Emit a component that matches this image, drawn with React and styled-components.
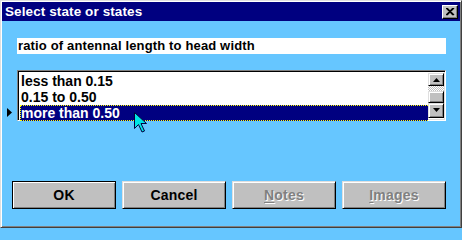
import React from 'react'
import styled, { createGlobalStyle } from 'styled-components'

const Global = createGlobalStyle`
    html, body {
        margin: 0;
        padding: 0;
        width: 462px;
        height: 228px;
        overflow: hidden;
        background: #66c6ff;
    }
    body {
        font-family: 'Liberation Sans', Arial, sans-serif;
        font-size: 12px;
        font-weight: bold;
    }
`

const Window = styled.div`
    position: relative;
    box-sizing: border-box;
    width: 462px;
    height: 228px;
    display: flex;
    flex-direction: column;
    background: #66c6ff;
    border-top: 1px solid #dfdfdf;
    border-left: 1px solid #dfdfdf;
    border-right: 1px solid #404040;
    border-bottom: 1px solid #404040;
    box-shadow: inset 1px 1px 0 #ffffff, inset -1px -1px 0 #808080;
    padding: 1px;
`

const TitleBar = styled.div`
    height: 19px;
    background: #000080;
    color: #ffffff;
    display: flex;
    align-items: center;
    justify-content: space-between;
    padding: 0 2px 0 3px;
    font-size: 13.5px;
    letter-spacing: 0.1px;
`

const CloseButton = styled.div`
    box-sizing: border-box;
    width: 16px;
    height: 14px;
    background: #c0c0c0;
    border-top: 1px solid #ffffff;
    border-left: 1px solid #ffffff;
    border-right: 1px solid #000000;
    border-bottom: 1px solid #000000;
    box-shadow: inset -1px -1px 0 #808080;
    display: flex;
    align-items: center;
    justify-content: center;
`

const Body = styled.div`
    flex: 1;
    display: flex;
    flex-direction: column;
    padding: 17px 14px 0 5px;
`

const Caption = styled.div`
    margin-left: 10px;
    height: 16px;
    line-height: 16px;
    background: #ffffff;
    color: #000000;
    padding-left: 1px;
    font-size: 13px;
    letter-spacing: 0.15px;
`

const ListRow = styled.div`
    display: flex;
    align-items: flex-end;
    gap: 5px;
    margin-top: 16px;
`

const Marker = styled.div`
    width: 5px;
    height: 51px;
    display: flex;
    align-items: flex-end;
    padding-bottom: 4px;
    box-sizing: border-box;
`

const ListBox = styled.div`
    flex: 1;
    box-sizing: border-box;
    height: 51px;
    display: flex;
    background: #ffffff;
    border-top: 1px solid #808080;
    border-left: 1px solid #808080;
    border-right: 1px solid #ffffff;
    border-bottom: 1px solid #ffffff;
    box-shadow: inset 1px 1px 0 #000000, inset -1px -1px 0 #dfdfdf;
    padding: 2px 2px 2px 2px;
`

const Items = styled.div`
    flex: 1;
    display: flex;
    flex-direction: column;
`

const Item = styled.div`
    box-sizing: border-box;
    height: 16px;
    line-height: 15px;
    padding-left: 0;
    font-size: 14px;
    color: ${({ selected }) => (selected ? '#ffffff' : '#000000')};
    background: ${({ selected }) => (selected ? '#000080' : 'transparent')};
    border: 1px dotted ${({ selected }) => (selected ? '#ffff00' : 'transparent')};
    border-right: none;
`

const ScrollBar = styled.div`
    width: 16px;
    display: flex;
    flex-direction: column;
    margin-right: -1px;
`

const ScrollButton = styled.div`
    box-sizing: border-box;
    height: ${({ h }) => h || 14}px;
    background: #c0c0c0;
    border-top: 1px solid #dfdfdf;
    border-left: 1px solid #dfdfdf;
    border-right: 1px solid #000000;
    border-bottom: 1px solid #000000;
    box-shadow: inset 1px 1px 0 #ffffff, inset -1px -1px 0 #808080;
    display: flex;
    align-items: center;
    justify-content: center;
`

const Track = styled.div`
    height: 5px;
    background-color: #ffffff;
    background-image: repeating-conic-gradient(#c0c0c0 0 25%, #ffffff 0 50%);
    background-size: 2px 2px;
`

const ButtonRow = styled.div`
    display: flex;
    gap: 6px;
    margin-top: auto;
    margin-bottom: 17px;
    margin-left: 5px;
`

const Button = styled.div`
    box-sizing: border-box;
    width: 104px;
    height: 28px;
    background: #c0c0c0;
    display: flex;
    align-items: center;
    justify-content: center;
    font-size: 14px;
    letter-spacing: 0.2px;
    color: ${({ disabled }) => (disabled ? '#808080' : '#000000')};
    text-shadow: ${({ disabled }) => (disabled ? '1px 1px 0 #ffffff' : 'none')};
    border: 1px solid #000000;
    border-top-color: ${({ isDefault }) => (isDefault ? '#000000' : '#dfdfdf')};
    border-left-color: ${({ isDefault }) => (isDefault ? '#000000' : '#dfdfdf')};
    box-shadow: inset 1px 1px 0 #ffffff, inset -1px -1px 0 #808080;

    u {
        text-decoration: underline;
        text-underline-offset: 2px;
    }
`

const Cursor = styled.svg`
    position: absolute;
    left: 133px;
    top: 111px;
`

const Arrow = ({ up }) => (
    <svg width="7" height="4" viewBox="0 0 7 4">
        <polygon points={up ? '3.5,0 7,4 0,4' : '0,0 7,0 3.5,4'} fill="#000000" />
    </svg>
)

export default function App() {
    return (
        <>
            <Global />
            <Window>
                <TitleBar>
                    <span>Select state or states</span>
                    <CloseButton>
                        <svg width="9" height="8" viewBox="0 0 9 8">
                            <path d="M1 0 L8 7 M8 0 L1 7 M0 0 L7 7 M7 0 L0 7" stroke="#000" strokeWidth="1.2" />
                        </svg>
                    </CloseButton>
                </TitleBar>
                <Body>
                    <Caption>ratio of antennal length to head width</Caption>
                    <ListRow>
                        <Marker>
                            <svg width="5" height="9" viewBox="0 0 5 9">
                                <polygon points="0,0 5,4.5 0,9" fill="#000000" />
                            </svg>
                        </Marker>
                        <ListBox>
                            <Items>
                                <Item>less than 0.15</Item>
                                <Item>0.15 to 0.50</Item>
                                <Item selected>more than 0.50</Item>
                            </Items>
                            <ScrollBar>
                                <ScrollButton h={14}>
                                    <Arrow up />
                                </ScrollButton>
                                <Track />
                                <ScrollButton h={12} />
                                <ScrollButton h={16}>
                                    <Arrow />
                                </ScrollButton>
                            </ScrollBar>
                        </ListBox>
                    </ListRow>
                    <ButtonRow>
                        <Button isDefault>OK</Button>
                        <Button>Cancel</Button>
                        <Button disabled>
                            <span><u>N</u>otes</span>
                        </Button>
                        <Button disabled>
                            <span><u>I</u>mages</span>
                        </Button>
                    </ButtonRow>
                </Body>
                <Cursor width="14" height="21" viewBox="0 0 14 21">
                    <polygon
                        points="0.5,0.5 0.5,16.5 4.5,12.5 8,20 10.5,19 7,11.5 12.5,11.5"
                        fill="#00e5e5"
                        stroke="#000040"
                        strokeWidth="1"
                    />
                </Cursor>
            </Window>
        </>
    )
}
